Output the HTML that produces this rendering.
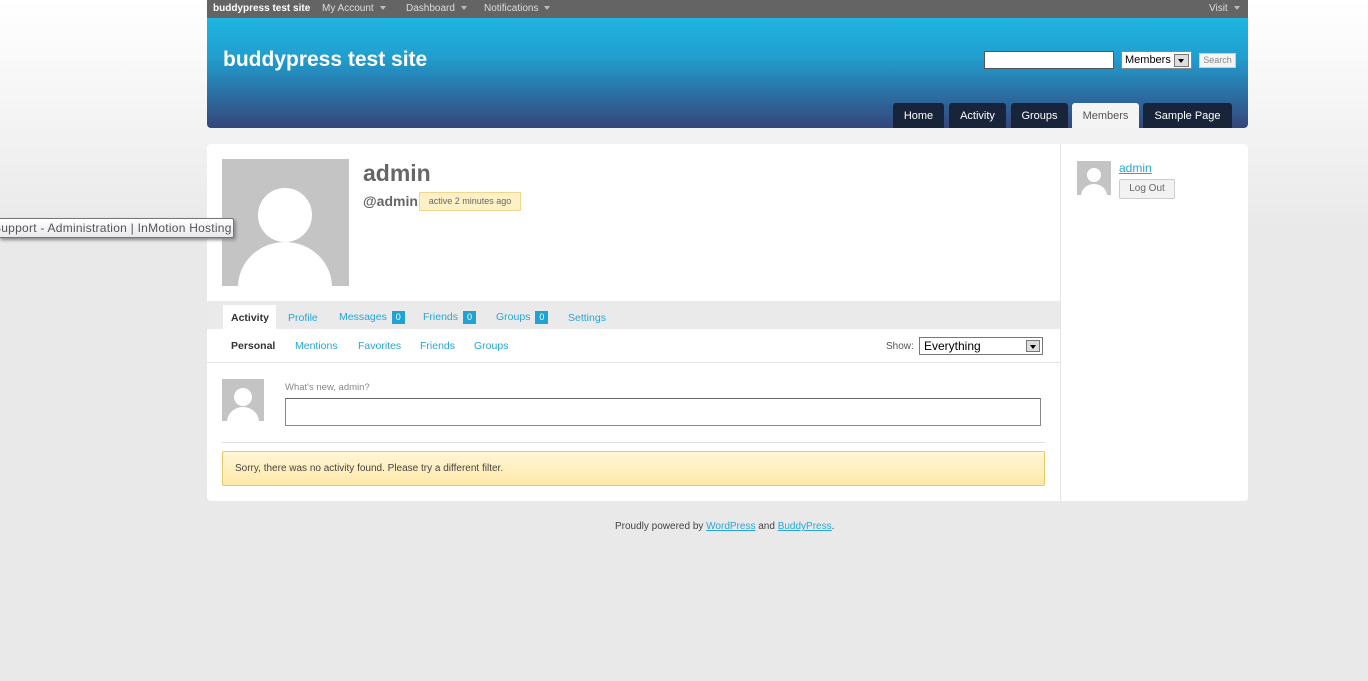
<!DOCTYPE html>
<html><head><meta charset="utf-8"><style>
*{margin:0;padding:0;box-sizing:border-box}
body{width:1368px;height:681px;overflow:hidden;position:relative;font-family:"Liberation Sans",Arial,sans-serif;background:linear-gradient(#fff 0,#e9e9e9 230px,#e9e9e9 100%);font-size:11px;color:#333}
.a{position:absolute}
#bar{left:207px;top:0;width:1041px;height:18px;background:#646464;color:#ddd;font-size:10px}
#bar span{position:absolute;top:3px}
.tri{display:inline-block;width:0;height:0;border-left:3px solid transparent;border-right:3px solid transparent;border-top:4px solid #bbb;margin-left:6px;vertical-align:1px}
#hdr{left:207px;top:18px;width:1041px;height:110px;background:linear-gradient(#20b4e1 0%,#219fcf 35%,#2b6ea2 70%,#35457a 100%);border-radius:0 0 4px 4px}
#title{left:16px;top:30px;color:#fff;font-weight:bold;font-size:21px}
.nav{top:85px;height:25px;background:#17243a;color:#fff;font-size:11px;text-align:center;line-height:26px;border-radius:3px 3px 0 0}
#main{left:207px;top:144px;width:1041px;height:357px;background:#fff;border-radius:4px}
.av{background:#c4c4c4;overflow:hidden}
.tab{top:3px;color:#27a6d6;font-size:10.5px}
.cnt{display:inline-block;background:#1fa3d3;color:#fff;font-size:9px;padding:0 4px;line-height:13px;margin-left:2px}
.sub{top:196px;color:#27a6d6;font-size:10.5px}
</style></head><body>
<div id="bar" class="a">
<span style="left:6px;color:#fff;font-weight:bold">buddypress test site</span>
<span style="left:115px">My Account<i class="tri"></i></span>
<span style="left:199px">Dashboard<i class="tri"></i></span>
<span style="left:277px">Notifications<i class="tri"></i></span>
<span style="left:1002px">Visit<i class="tri"></i></span>
</div>
<div id="hdr" class="a">
<div id="title" class="a">buddypress test site</div>
<div class="a" style="left:777px;top:33px;width:130px;height:18px;background:#fff;border:1px solid #555"></div>
<div class="a" style="left:914px;top:33px;width:71px;height:18px;background:#fff;border:1px solid #888;font-size:11px;color:#000;padding:2px 3px">Members</div>
<div class="a" style="left:967px;top:36px;width:15px;height:13px;background:#ddd;border:1px solid #777"><i class="tri" style="border-top-color:#000;margin:4px 0 0 3px;display:block"></i></div>
<div class="a" style="left:992px;top:35px;width:37px;height:15px;background:#f4f4f4;border:1px solid #ccc;font-size:9px;color:#888;text-align:center;line-height:13px">Search</div>
<div class="a nav" style="left:686px;width:51px">Home</div>
<div class="a nav" style="left:742px;width:57px">Activity</div>
<div class="a nav" style="left:804px;width:57px">Groups</div>
<div class="a nav" style="left:865px;width:67px;background:#f4f4f4;color:#555">Members</div>
<div class="a nav" style="left:936px;width:89px">Sample Page</div>
</div>
<div id="main" class="a">
<div class="a av" style="left:15px;top:15px;width:127px;height:127px"><svg width="127" height="127"><circle cx="63" cy="56" r="27" fill="#fff"/><ellipse cx="63" cy="128" rx="47" ry="45" fill="#fff"/></svg></div>
<div class="a" style="left:156px;top:16px;font-size:23px;font-weight:bold;color:#666">admin</div>
<div class="a" style="left:156px;top:49px;font-size:14px;font-weight:bold;color:#666">@admin</div>
<div class="a" style="left:212px;top:48px;width:102px;height:19px;background:#fff1c6;border:1px solid #f0d68e;font-size:9px;color:#666;text-align:center;line-height:17px">active 2 minutes ago</div>
<div class="a" style="left:0;top:157px;width:853px;height:28px;background:#eaeaea">
<div class="a" style="left:16px;top:4px;width:53px;height:24px;background:#fff"></div>
<div class="a tab" style="left:24px;top:11px;color:#333;font-weight:bold">Activity</div>
<div class="a tab" style="left:81px;top:11px">Profile</div>
<div class="a tab" style="left:132px;top:10px">Messages <span class="cnt">0</span></div>
<div class="a tab" style="left:216px;top:10px">Friends <span class="cnt">0</span></div>
<div class="a tab" style="left:289px;top:10px">Groups <span class="cnt">0</span></div>
<div class="a tab" style="left:361px;top:11px">Settings</div>
</div>
<div class="a sub" style="left:24px;color:#333;font-weight:bold">Personal</div>
<div class="a sub" style="left:88px">Mentions</div>
<div class="a sub" style="left:151px">Favorites</div>
<div class="a sub" style="left:213px">Friends</div>
<div class="a sub" style="left:267px">Groups</div>
<div class="a" style="left:679px;top:197px;font-size:10px;color:#555">Show:</div>
<div class="a" style="left:712px;top:193px;width:124px;height:18px;border:1px solid #777;font-size:12px;color:#000;padding:1px 4px">Everything</div>
<div class="a" style="left:819px;top:196px;width:14px;height:12px;background:#ddd;border:1px solid #777"><i class="tri" style="border-top-color:#000;margin:4px 0 0 3px;display:block"></i></div>
<div class="a" style="left:0;top:218px;width:853px;height:1px;background:#e4e4e4"></div>
<div class="a av" style="left:15px;top:235px;width:42px;height:42px"><svg width="42" height="42"><circle cx="21" cy="18" r="9" fill="#fff"/><ellipse cx="21" cy="43" rx="16" ry="15" fill="#fff"/></svg></div>
<div class="a" style="left:78px;top:238px;font-size:9.5px;color:#888">What's new, admin?</div>
<div class="a" style="left:78px;top:254px;width:756px;height:28px;border:1px solid #888;border-top-color:#666"></div>
<div class="a" style="left:15px;top:298px;width:823px;height:1px;background:#e0e0e0"></div>
<div class="a" style="left:15px;top:307px;width:823px;height:35px;background:linear-gradient(#fff6d6,#ffe9a9);border:1px solid #e6c96a;border-radius:2px;font-size:10px;color:#444;padding:11px 12px">Sorry, there was no activity found. Please try a different filter.</div>
<div class="a" style="left:853px;top:0;width:1px;height:357px;background:#e4e4e4"></div>
<div class="a av" style="left:870px;top:17px;width:34px;height:34px"><svg width="34" height="34"><circle cx="17" cy="14" r="7" fill="#fff"/><ellipse cx="17" cy="35" rx="13" ry="12" fill="#fff"/></svg></div>
<div class="a" style="left:912px;top:17px;font-size:12px;color:#27a6d6;text-decoration:underline">admin</div>
<div class="a" style="left:912px;top:35px;width:56px;height:20px;background:#f2f2f2;border:1px solid #ccc;border-radius:2px;font-size:10px;color:#666;text-align:center;line-height:18px">Log Out</div>
</div>
<div class="a" style="left:615px;top:521px;font-size:10px;color:#444">Proudly powered by <u style="color:#27a6d6">WordPress</u> and <u style="color:#27a6d6">BuddyPress</u>.</div>
<div class="a" style="left:-2px;top:218px;width:236px;height:20px;background:linear-gradient(#fff,#e8e8ee);border:1px solid #767676;border-radius:2px;box-shadow:2px 2px 3px #888;font-size:12px;letter-spacing:0.25px;color:#555;line-height:18px;white-space:nowrap;overflow:hidden;text-indent:-6px">Support - Administration | InMotion Hosting</div>
</body></html>
